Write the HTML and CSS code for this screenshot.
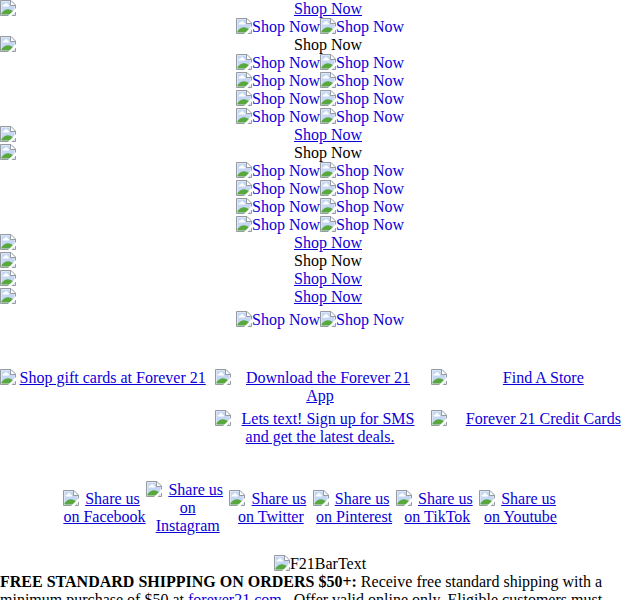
FILE: index.html
```html
<!DOCTYPE html>
<html lang="en">
<head>
  <meta charset="UTF-8">
  <meta name="viewport" content="width=device-width, initial-scale=1.0">
  <title>Forever 21</title>
  <link rel="stylesheet" href="styles.css">
</head>
<body>
  <svg class="sprite" aria-hidden="true">
    <symbol id="pic" viewBox="0 0 16 16">
      <path d="M0.5 0.5H11L15.5 5V15.5H0.5Z" fill="#eef3fc"/>
      <path d="M1.5 1.5H10.5V5.5H14.5V14.5H1.5Z" fill="#c5d7f3"/>
      <path d="M2.5 6.5C2.5 5 3.5 4.5 4.3 4.7C4.8 2.8 7.6 3 7.8 4.8C9.3 4.8 9.3 6.5 8.6 6.5Z" fill="#fff"/>
      <path d="M1.5 14.5V13C3.5 10.5 5.5 9.2 8 9.2C10 9.2 12 10.2 13.5 12V14.5Z" fill="#58a83d"/>
      <path d="M11 1V5H15Z" fill="#fff"/>
      <path d="M0.5 0.5H11L15.5 5V15.5H0.5Z" fill="none" stroke="#969ba0"/>
      <path d="M10.5 0.5V5.5H15.5" fill="none" stroke="#969ba0"/>
      <path d="M8 16L16 8V11.5L11.5 16Z" fill="#fff"/>
    </symbol>
  </svg>

  <main>
    <a href="#" class="banner"><svg class="icon"><use href="#pic"/></svg>Shop Now</a>
    <div class="pair">
      <a href="#"><svg class="icon"><use href="#pic"/></svg>Shop Now</a>
      <a href="#"><svg class="icon"><use href="#pic"/></svg>Shop Now</a>
    </div>
    <div class="banner"><svg class="icon"><use href="#pic"/></svg>Shop Now</div>
    <div class="pair">
      <a href="#"><svg class="icon"><use href="#pic"/></svg>Shop Now</a>
      <a href="#"><svg class="icon"><use href="#pic"/></svg>Shop Now</a>
    </div>
    <div class="pair">
      <a href="#"><svg class="icon"><use href="#pic"/></svg>Shop Now</a>
      <a href="#"><svg class="icon"><use href="#pic"/></svg>Shop Now</a>
    </div>
    <div class="pair">
      <a href="#"><svg class="icon"><use href="#pic"/></svg>Shop Now</a>
      <a href="#"><svg class="icon"><use href="#pic"/></svg>Shop Now</a>
    </div>
    <div class="pair">
      <a href="#"><svg class="icon"><use href="#pic"/></svg>Shop Now</a>
      <a href="#"><svg class="icon"><use href="#pic"/></svg>Shop Now</a>
    </div>
    <a href="#" class="banner"><svg class="icon"><use href="#pic"/></svg>Shop Now</a>
    <div class="banner"><svg class="icon"><use href="#pic"/></svg>Shop Now</div>
    <div class="pair">
      <a href="#"><svg class="icon"><use href="#pic"/></svg>Shop Now</a>
      <a href="#"><svg class="icon"><use href="#pic"/></svg>Shop Now</a>
    </div>
    <div class="pair">
      <a href="#"><svg class="icon"><use href="#pic"/></svg>Shop Now</a>
      <a href="#"><svg class="icon"><use href="#pic"/></svg>Shop Now</a>
    </div>
    <div class="pair">
      <a href="#"><svg class="icon"><use href="#pic"/></svg>Shop Now</a>
      <a href="#"><svg class="icon"><use href="#pic"/></svg>Shop Now</a>
    </div>
    <div class="pair">
      <a href="#"><svg class="icon"><use href="#pic"/></svg>Shop Now</a>
      <a href="#"><svg class="icon"><use href="#pic"/></svg>Shop Now</a>
    </div>
    <a href="#" class="banner"><svg class="icon"><use href="#pic"/></svg>Shop Now</a>
    <div class="banner"><svg class="icon"><use href="#pic"/></svg>Shop Now</div>
    <a href="#" class="banner"><svg class="icon"><use href="#pic"/></svg>Shop Now</a>
    <a href="#" class="banner"><svg class="icon"><use href="#pic"/></svg>Shop Now</a>
    <div class="pair pair-last">
      <a href="#"><svg class="icon"><use href="#pic"/></svg>Shop Now</a>
      <a href="#"><svg class="icon"><use href="#pic"/></svg>Shop Now</a>
    </div>
  </main>

  <nav class="services">
    <a href="#"><svg class="icon"><use href="#pic"/></svg>Shop gift cards at Forever 21</a>
    <a href="#"><svg class="icon"><use href="#pic"/></svg>Download the Forever 21 App</a>
    <a href="#"><svg class="icon"><use href="#pic"/></svg>Find A Store</a>
    <a href="#" class="sms"><svg class="icon"><use href="#pic"/></svg>Lets text! Sign up for SMS and get the latest deals.</a>
    <a href="#"><svg class="icon"><use href="#pic"/></svg>Forever 21 Credit Cards</a>
  </nav>

  <nav class="social">
    <a href="#"><svg class="icon"><use href="#pic"/></svg>Share us on Facebook</a>
    <a href="#"><svg class="icon"><use href="#pic"/></svg>Share us on Instagram</a>
    <a href="#"><svg class="icon"><use href="#pic"/></svg>Share us on Twitter</a>
    <a href="#"><svg class="icon"><use href="#pic"/></svg>Share us on Pinterest</a>
    <a href="#"><svg class="icon"><use href="#pic"/></svg>Share us on TikTok</a>
    <a href="#"><svg class="icon"><use href="#pic"/></svg>Share us on Youtube</a>
  </nav>

  <footer>
    <div class="pair"><span><svg class="icon"><use href="#pic"/></svg>F21BarText</span></div>
    <p class="terms"><b>FREE STANDARD SHIPPING ON ORDERS $50+:</b> Receive free standard shipping with a minimum purchase of $50 at <a href="#">forever21.com</a> . Offer valid online only. Eligible customers must</p>
  </footer>
</body>
</html>
```
FILE: styles.css
```css
body {
  margin: 0;
  background: #fff;
  color: #000;
  font-family: "Liberation Serif", "Times New Roman", serif;
  font-size: 16px;
  line-height: 18px;
}
a { color: #0c00d8; }
.sprite {
  display: none;
}
.icon {
  float: left;
  width: 16px;
  height: 16px;
}
.banner {
  display: block;
  text-align: center;
}
.pair {
  display: flex;
  justify-content: center;
}
.pair a {
  text-decoration: none;
}
.pair-last {
  margin-top: 5px;
}
.services {
  display: grid;
  grid-template-columns: repeat(3, 1fr);
  gap: 5px 6px;
  margin-top: 40px;
  text-align: center;
}
.services .sms {
  grid-column: 2;
}
.social {
  display: flex;
  align-items: center;
  width: 78%;
  margin: 35px auto 0;
  padding-right: 15px;
  text-align: center;
}
.social a {
  flex: 1 1 0;
  min-width: 0;
}
footer {
  margin-top: 20px;
}
.terms {
  margin: 0;
}
.terms a {
  text-decoration: none;
}
```
